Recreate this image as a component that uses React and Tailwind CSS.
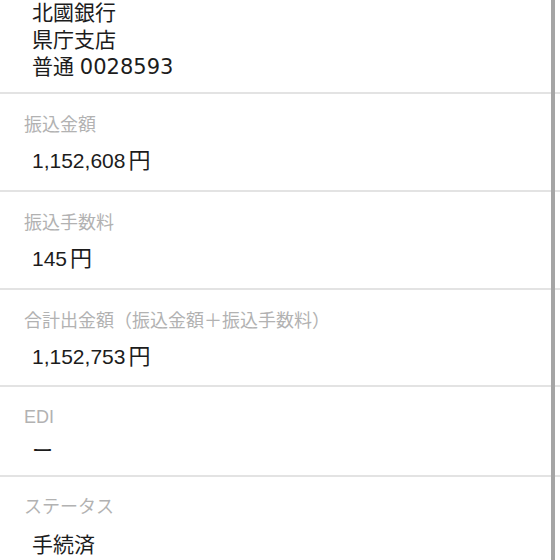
import React from 'react';

const font = { fontFamily: '"Liberation Sans", "Noto Sans CJK JP", sans-serif' };

function Divider() {
  return <div className="h-[2px] bg-[#e3e3e3]" />;
}

function Yen({ amount }) {
  return (
    <>
      {amount}
      <span className="ml-[3px] text-[22px]">円</span>
    </>
  );
}

function Row({ label, value, className = '', gap = 'mt-[10px]' }) {
  return (
    <div className={className}>
      <div className="pl-[24px] text-[18px] leading-[24px] text-[#b2b2b2]">{label}</div>
      <div className={`${gap} pl-[32px] text-[21px] leading-[28px] text-[#1c1c1c]`}>{value}</div>
    </div>
  );
}

export default function App() {
  return (
    <div className="relative h-[560px] w-[560px] overflow-hidden bg-white" style={font}>
      <div className="-mt-[1px] pb-[11px] pl-[32px] text-[21px] leading-[27px] text-[#1c1c1c]">
        <div>北國銀行</div>
        <div>県庁支店</div>
        <div>
          普通 <span className="font-['DejaVu_Sans'] text-[21px]">0028593</span>
        </div>
      </div>
      <Divider />
      <Row className="pt-[19px] pb-[15px]" label="振込金額" value={<Yen amount="1,152,608" />} />
      <Divider />
      <Row className="pt-[19px] pb-[15px]" label="振込手数料" value={<Yen amount="145" />} />
      <Divider />
      <Row
        className="pt-[19px] pb-[14px]"
        label="合計出金額（振込金額＋振込手数料）"
        value={<Yen amount="1,152,753" />}
      />
      <Divider />
      <Row className="pt-[18px] pb-[10px]" gap="mt-[8px]" label="EDI" value="ー" />
      <Divider />
      <Row className="pt-[18px]" gap="mt-[12px]" label="ステータス" value="手続済" />

      <div className="absolute top-0 bottom-0 right-[5px] w-[4px] bg-[#a5a5a5]" />
    </div>
  );
}
